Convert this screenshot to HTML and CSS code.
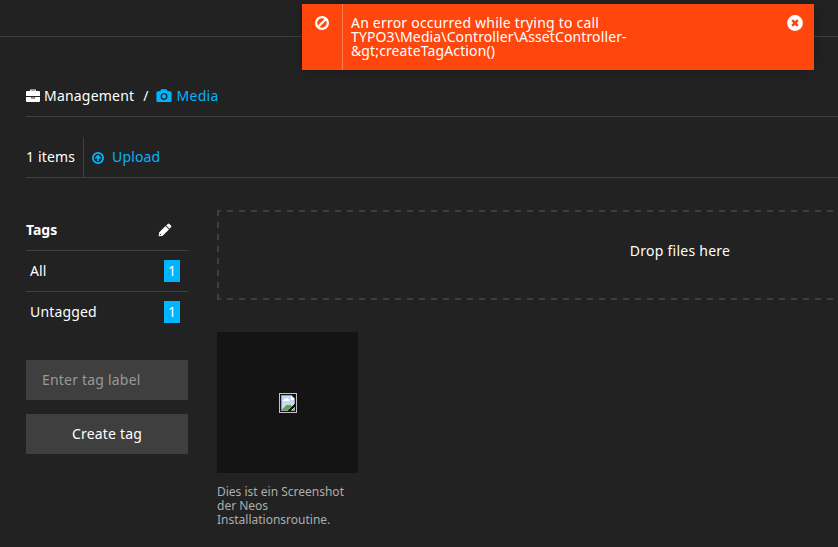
FILE: index.html
```html
<!DOCTYPE html>
<html lang="en">
<head>
<meta charset="utf-8">
<title>Media</title>
<link rel="stylesheet" href="styles.css">
</head>
<body>
<header class="topbar"></header>
<div class="notification">
  <div class="notification-icon">
    <svg width="14" height="14" viewBox="0 0 14 14" fill="none" stroke="#fff" stroke-width="2.3"><circle cx="7" cy="7" r="5.850"/><path d="M3 11 11 3"/></svg>
  </div>
  <p class="notification-text"><span class="wide">An error occurred while trying to call</span> TYPO3\Media\Controller\AssetController-&amp;gt;createTagAction()</p>
  <svg class="notification-close" width="16" height="16" viewBox="0 0 16 16"><circle cx="8" cy="8" r="7.9" fill="#fff"/><path d="M5.2 5.2l5.600 5.600M10.800 5.200l-5.600 5.600" stroke="#ff460d" stroke-width="2.500"/></svg>
</div>
<main class="content">
  <nav class="breadcrumb">
    <svg width="14" height="14" viewBox="0 0 14 14" fill="#fff"><path fill-rule="evenodd" d="M4 2V1Q4 .4 4.600.4h4.800q.6 0 .6.600V2h3q1 0 1 1v4H0V3q0-1 1-1zM5.200 2h3.600v-.6H5.200zM0 8h5.300v1.500h3.400V8H14v4q0 1-1 1H1q-1 0-1-1zM6.300 8h1.400v.7H6.300z"/></svg>
    <span class="crumb-management">Management</span>
    <span class="crumb-divider">/</span>
    <svg width="16" height="14" viewBox="0 0 16 14"><path fill="#00b5ff" d="M5.200.3h5.300l1.200 2H14q1.600 0 1.600 1.500v7.700q0 1.500-1.600 1.500H2Q.4 13 .4 11.500V3.800Q.4 2.300 2 2.300h2z"/><circle cx="8" cy="7.500" r="2.800" fill="#00b5ff" stroke="#222" stroke-width="1.300"/></svg>
    <span class="crumb-media">Media</span>
  </nav>
  <div class="toolbar">
    <span class="item-count">1 items</span>
    <a class="upload">
      <svg width="12" height="12" viewBox="0 0 12 12" fill="none" stroke="#00b5ff"><circle cx="6" cy="6" r="5.100" stroke-width="1.800"/><path d="M6 9.200V4M3.400 6.300 6 3.700l2.600 2.600" stroke-width="1.700"/></svg>
      <span>Upload</span>
    </a>
  </div>
  <div class="columns">
    <aside class="sidebar">
      <div class="tags-head">
        <h2>Tags</h2>
        <svg width="14" height="14" viewBox="0 0 14 14" fill="#fff"><path fill-rule="evenodd" d="M.6 13.300 1.100 9.500 7.500 3.100l3.500 3.500-6.600 6.300zM2 10.600l-.2 1.600 1.500-.3zM8.200 2.400 9.800.9q.8-.7 1.600 0l1.600 1.500q.7.800 0 1.600l-1.400 1.800z"/></svg>
      </div>
      <div class="tag"><span>All</span><span class="count">1</span></div>
      <div class="tag"><span>Untagged</span><span class="count">1</span></div>
      <input class="tag-input" type="text" placeholder="Enter tag label">
      <button class="tag-button">Create tag</button>
    </aside>
    <section class="assets">
      <div class="dropzone">Drop files here</div>
      <figure class="asset">
        <div class="thumb">
          <svg width="18" height="20" viewBox="0 0 18 20" shape-rendering="crispEdges"><path d="M.5.500h17v19H.5z" fill="none" stroke="#c0c0c0"/><path d="M2 2h10l4 4v12H2z" fill="#999"/><path d="M3 3h9v4h3v10H3z" fill="#c6d8f8"/><path d="M5 6h2V5h2v1h1v2H4V7h1z" fill="#fff"/><path d="M3 17v-1l4-4h4l2 2v3z" fill="#57ad3d"/><path d="M12 3v4h3V6l-2-3z" fill="#fff"/><path d="M8 18l8-8v3l-5 5z" fill="#141414"/><path d="M13 17l2-2v2z" fill="#57ad3d"/></svg>
        </div>
        <figcaption>Dies ist ein Screenshot der Neos Installationsroutine.</figcaption>
      </figure>
    </section>
  </div>
</main>
</body>
</html>
```
FILE: styles.css
```css
* { box-sizing: border-box; }
html { overflow: hidden; }
body {
  margin: 0;
  height: 547px;
  overflow: hidden;
  background: #222;
  color: #fff;
  font: 14px/20px "Noto Sans", sans-serif;
}
svg { display: block; flex: none; }
.topbar { height: 37px; border-bottom: 1px solid #3f3f3f; }
.notification {
  position: absolute;
  top: 4px;
  left: 302px;
  width: 512px;
  height: 66px;
  display: flex;
  background: #ff460d;
  box-shadow: 0 0 10px rgba(0, 0, 0, .2);
}
.notification-icon { width: 41px; padding: 12px 0 0 13px; border-right: 1px solid #ff7d56; }
.notification-text { width: 300px; margin: 12px 0 0 8px; line-height: 14px; letter-spacing: .12px; }
.wide { letter-spacing: .21px; }
.notification-close { margin: 11px 11px 0 auto; }
.content { margin-left: 26px; }
.breadcrumb {
  height: 80px;
  padding-top: 38px;
  display: flex;
  align-items: center;
  border-bottom: 1px solid #3f3f3f;
}
.crumb-management { margin-left: 4px; letter-spacing: .2px; }
.crumb-divider { margin: 0 8px 0 9px; }
.crumb-media { margin-left: 4px; color: #00b5ff; letter-spacing: .3px; }
.toolbar { display: flex; height: 61px; padding-top: 20px; border-bottom: 1px solid #3f3f3f; }
.item-count { width: 58px; line-height: 40px; letter-spacing: .15px; border-right: 1px solid #3f3f3f; }
.upload { display: flex; align-items: center; gap: 8px; margin-left: 8px; color: #00b5ff; letter-spacing: .15px; }
.upload svg { margin-top: 1px; }
.columns { display: flex; gap: 29px; padding-top: 32px; }
.sidebar { width: 162px; flex: none; }
.tags-head {
  display: flex;
  align-items: center;
  justify-content: space-between;
  height: 40px;
  padding-right: 16px;
}
.tags-head h2 { margin: 0; font-size: 14px; line-height: 20px; }
.tag {
  display: flex;
  align-items: center;
  justify-content: space-between;
  height: 41px;
  padding: 0 8px 0 4px;
  border-top: 1px solid #3f3f3f;
  letter-spacing: .15px;
}
.count { width: 16px; height: 22px; line-height: 22px; text-align: center; background: #00b5ff; }
.tag-input, .tag-button {
  display: block;
  width: 162px;
  height: 40px;
  border: 0;
  border-radius: 0;
  background: #3f3f3f;
  color: #fff;
  font: inherit;
  letter-spacing: .2px;
}
.tag-input { margin-top: 28px; padding: 0 16px 2px; }
.tag-input::placeholder { color: #999; opacity: 1; }
.tag-button { margin-top: 14px; padding: 0; }
.assets { flex: 1; }
.dropzone {
  --dash-x: repeating-linear-gradient(90deg, #3f3f3f 0 4px, transparent 4px 10px, #3f3f3f 10px 12px);
  --dash-y: repeating-linear-gradient(180deg, #3f3f3f 0 6px, transparent 6px 12px);
  height: 90px;
  padding-left: 305px;
  line-height: 82px;
  letter-spacing: .25px;
  text-align: center;
  background:
    var(--dash-x) 0 0 / 100% 2px no-repeat,
    var(--dash-x) 0 100% / 100% 2px no-repeat,
    var(--dash-y) 0 0 / 2px 100% no-repeat;
}
.asset { width: 141px; margin: 32px 0 0; }
.thumb { height: 141px; display: flex; align-items: center; justify-content: center; background: #141414; }
.asset figcaption { margin-top: 12px; font-size: 12px; line-height: 14px; color: #adadad; }
```
